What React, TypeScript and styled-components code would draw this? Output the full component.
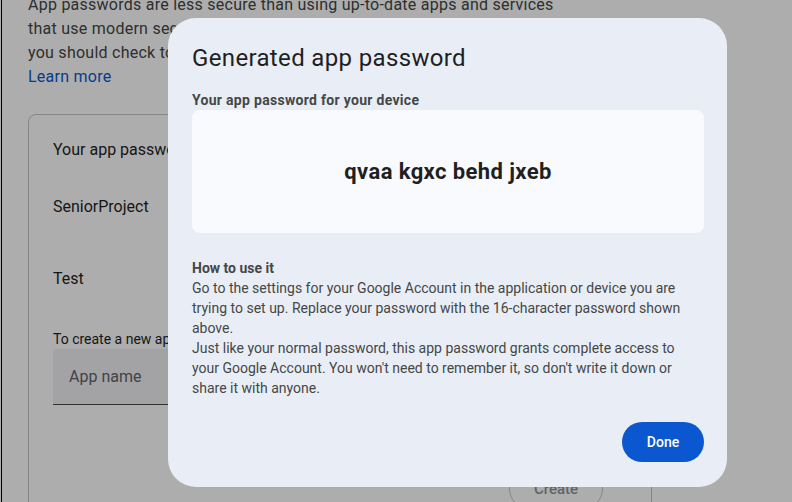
import React from "react";
import styled, { createGlobalStyle } from "styled-components";

const GlobalStyle = createGlobalStyle`
  html, body { margin: 0; padding: 0; background: #ffffff; overflow: hidden; }
  body { font-family: Roboto, "Liberation Sans", Arial, sans-serif; color: #1f1f1f; }
  * { box-sizing: border-box; }
`;

const Page = styled.div`
  margin-left: 1px;
  border-left: 1px solid #000;
  height: 502px;
  padding: 0 0 0 26px;
  overflow: hidden;
`;

const Intro = styled.p`
  margin: -7px 0 0;
  width: 532px;
  font-size: 16px;
  line-height: 24px;
  letter-spacing: 0.25px;
  color: #444746;
`;

const Link = styled.a`
  color: #0b57d0;
  text-decoration: none;
`;

const Card = styled.section`
  margin-top: 25px;
  width: 624px;
  height: 420px;
  border: 1px solid #c4c7c5;
  border-radius: 8px;
  padding: 24px 24px 0 24px;
`;

const CardTitle = styled.div`
  font-size: 16px;
  line-height: 22px;
  color: #1f1f1f;
`;

const RowList = styled.div`
  margin-top: 9px;
`;

const AppRow = styled.div`
  height: 72px;
  display: flex;
  align-items: center;
  font-size: 16px;
  color: #1f1f1f;
`;

const Hint = styled.div`
  margin-top: 15px;
  font-size: 14px;
  line-height: 20px;
  color: #1f1f1f;
`;

const InputBox = styled.div`
  width: 380px;
  height: 56px;
  background: #f0f1f4;
  border-bottom: 1px solid #444746;
  border-radius: 4px 4px 0 0;
  display: flex;
  align-items: center;
  padding-left: 16px;
  font-size: 16px;
  color: #5f6368;
`;

const CreateRow = styled.div`
  display: flex;
  justify-content: flex-end;
  margin-top: 64px;
  padding-right: 24px;
`;

const OutlineButton = styled.button`
  width: 94px;
  height: 40px;
  border: 1px solid #c4c7c5;
  border-radius: 20px;
  background: transparent;
  font-family: inherit;
  font-size: 15px;
  font-weight: 500;
  color: #909292;
`;

const Scrim = styled.div`
  position: fixed;
  inset: 0;
  background: rgba(0, 0, 0, 0.32);
`;

const Dialog = styled.div`
  position: fixed;
  left: 168px;
  top: 18px;
  width: 559px;
  height: 469px;
  background: #e9eef6;
  border-radius: 28px;
  padding: 24px 23px 25px 24px;
  display: flex;
  flex-direction: column;
`;

const DialogTitle = styled.h2`
  margin: 0;
  font-size: 24px;
  line-height: 32px;
  font-weight: 400;
  letter-spacing: 0.35px;
  color: #1f1f1f;
`;

const Label = styled.div`
  margin-top: 16px;
  font-size: 14px;
  line-height: 20px;
  font-weight: 700;
  letter-spacing: 0.3px;
  color: #444746;
`;

const PasswordBox = styled.div`
  height: 123px;
  background: #f8fafd;
  border-radius: 8px;
  display: flex;
  align-items: center;
  justify-content: center;
  font-size: 22px;
  font-weight: 700;
  letter-spacing: 0.4px;
  color: #1f1f1f;
`;

const Instructions = styled.div`
  margin-top: 25px;
  font-size: 14px;
  line-height: 20px;
  color: #444746;
`;

const Strong = styled.div`
  font-weight: 700;
`;

const Actions = styled.div`
  margin-top: auto;
  display: flex;
  justify-content: flex-end;
`;

const PrimaryButton = styled.button`
  width: 82px;
  height: 40px;
  border: none;
  border-radius: 20px;
  background: #0b57d0;
  color: #ffffff;
  font-family: inherit;
  font-size: 14px;
  font-weight: 500;
`;

export default function App() {
  return (
    <>
      <GlobalStyle />
      <Page>
        <Intro>
          App passwords are less secure than using up-to-date apps and services
          that use modern security standards. Before you create an app password,
          you should check to see if your app needs this in order to sign in.
          <br />
          <Link href="#">Learn more</Link>
        </Intro>
        <Card>
          <CardTitle>Your app passwords</CardTitle>
          <RowList>
            <AppRow>SeniorProject</AppRow>
            <AppRow>Test</AppRow>
          </RowList>
          <Hint>To create a new app specific password, type a name for it below...</Hint>
          <InputBox>App name</InputBox>
          <CreateRow>
            <OutlineButton>Create</OutlineButton>
          </CreateRow>
        </Card>
      </Page>
      <Scrim />
      <Dialog role="dialog">
        <DialogTitle>Generated app password</DialogTitle>
        <Label>Your app password for your device</Label>
        <PasswordBox>qvaa kgxc behd jxeb</PasswordBox>
        <Instructions>
          <Strong>How to use it</Strong>
          Go to the settings for your Google Account in the application or device
          you are trying to set up. Replace your password with the 16-character
          password shown above.
          <br />
          Just like your normal password, this app password grants complete access
          to your Google Account. You won't need to remember it, so don't write it
          down or share it with anyone.
        </Instructions>
        <Actions>
          <PrimaryButton>Done</PrimaryButton>
        </Actions>
      </Dialog>
    </>
  );
}
